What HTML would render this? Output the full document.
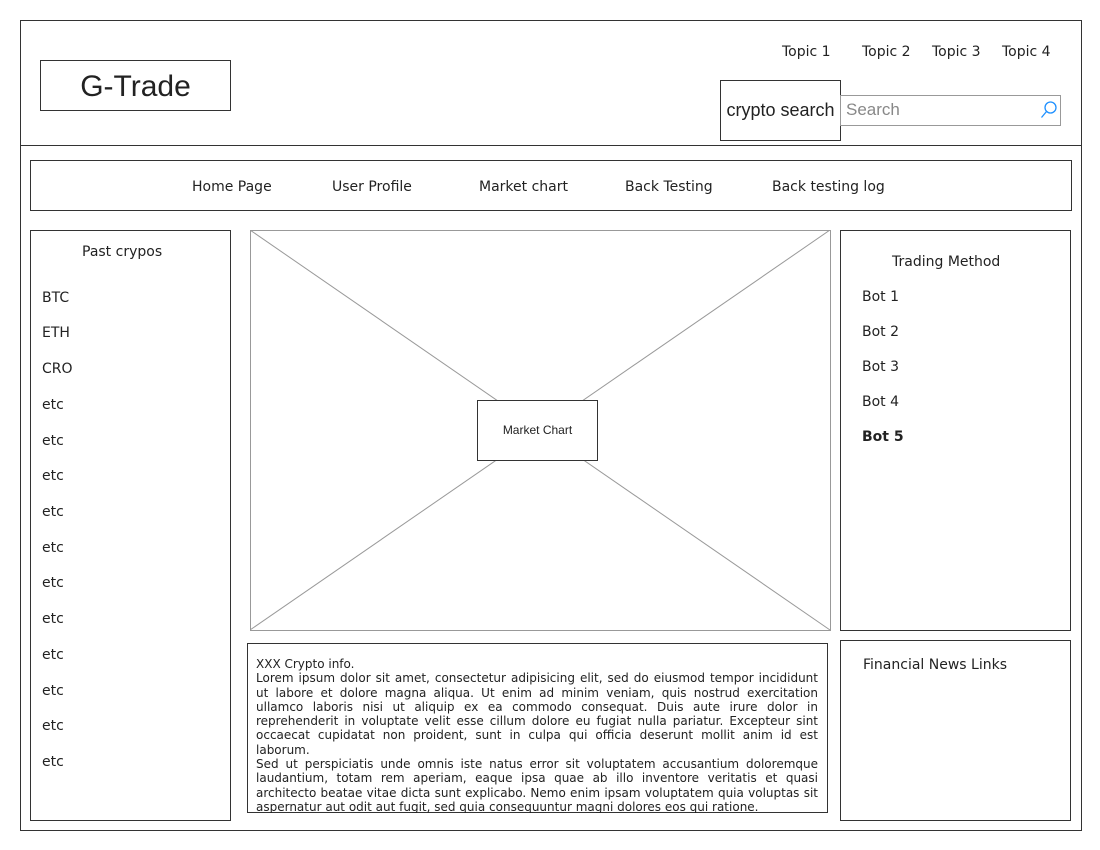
<!DOCTYPE html>
<html><head><style>
body{margin:0;width:1100px;height:850px;background:#fff;position:relative;font-family:"DejaVu Sans","Liberation Sans",sans-serif;color:#222;overflow:hidden}
.b{position:absolute;border:1.3px solid #333;box-sizing:border-box}
.t{position:absolute;font-size:14px;white-space:nowrap;margin-top:1px}
</style></head><body>
<div class="b" style="left:20px;top:20px;width:1062px;height:811px"></div>
<div style="position:absolute;left:20px;top:145px;width:1062px;border-top:1.3px solid #333"></div>
<div class="b" style="left:40px;top:60px;width:191px;height:51px"></div>
<div class="t" style="left:40px;top:69px;width:191px;text-align:center;font-family:'Liberation Sans',sans-serif;font-size:30px">G-Trade</div>
<div class="t" style="left:782px;top:43px">Topic 1</div>
<div class="t" style="left:862px;top:43px">Topic 2</div>
<div class="t" style="left:932px;top:43px">Topic 3</div>
<div class="t" style="left:1002px;top:43px">Topic 4</div>
<div class="b" style="left:720px;top:80px;width:121px;height:61px;border-width:1px"></div>
<div class="t" style="left:720px;top:99px;width:121px;text-align:center;font-family:'Liberation Sans',sans-serif;font-size:18px">crypto search</div>
<div class="b" style="left:840px;top:95px;width:221px;height:31px;border:1px solid #999"></div>
<div class="t" style="left:846px;top:99px;font-family:'Liberation Sans',sans-serif;font-size:17px;color:#888">Search</div>
<svg style="position:absolute;left:1040px;top:100px" width="18" height="20"><circle cx="10.5" cy="7.5" r="5.5" fill="none" stroke="#1e90ff" stroke-width="1.3"/><line x1="6.5" y1="11.5" x2="1.5" y2="17.5" stroke="#1e90ff" stroke-width="1.3"/></svg>
<div class="b" style="left:30px;top:160px;width:1042px;height:51px"></div>
<div class="t" style="left:192px;top:178px">Home Page</div>
<div class="t" style="left:332px;top:178px">User Profile</div>
<div class="t" style="left:479px;top:178px">Market chart</div>
<div class="t" style="left:625px;top:178px">Back Testing</div>
<div class="t" style="left:772px;top:178px">Back testing log</div>
<div class="b" style="left:30px;top:230px;width:201px;height:591px"></div>
<div class="t" style="left:82px;top:243px">Past crypos</div>
<div class="t" style="left:42px;top:289px">BTC</div>
<div class="t" style="left:42px;top:324px">ETH</div>
<div class="t" style="left:42px;top:360px">CRO</div>
<div class="t" style="left:42px;top:396px">etc</div>
<div class="t" style="left:42px;top:432px">etc</div>
<div class="t" style="left:42px;top:467px">etc</div>
<div class="t" style="left:42px;top:503px">etc</div>
<div class="t" style="left:42px;top:539px">etc</div>
<div class="t" style="left:42px;top:574px">etc</div>
<div class="t" style="left:42px;top:610px">etc</div>
<div class="t" style="left:42px;top:646px">etc</div>
<div class="t" style="left:42px;top:682px">etc</div>
<div class="t" style="left:42px;top:717px">etc</div>
<div class="t" style="left:42px;top:753px">etc</div>
<svg style="position:absolute;left:250px;top:230px" width="581" height="401"><rect x="0.5" y="0.5" width="580" height="400" fill="none" stroke="#999"/><line x1="0" y1="0" x2="580" y2="400" stroke="#999"/><line x1="580" y1="0" x2="0" y2="400" stroke="#999"/></svg>
<div class="b" style="left:477px;top:400px;width:121px;height:61px;border-width:1px;background:#fff"></div>
<div class="t" style="left:477px;top:422px;width:121px;text-align:center;font-family:'Liberation Sans',sans-serif;font-size:12px">Market Chart</div>
<div class="b" style="left:840px;top:230px;width:231px;height:401px"></div>
<div class="t" style="left:892px;top:253px">Trading Method</div>
<div class="t" style="left:862px;top:288px">Bot 1</div>
<div class="t" style="left:862px;top:323px">Bot 2</div>
<div class="t" style="left:862px;top:358px">Bot 3</div>
<div class="t" style="left:862px;top:393px">Bot 4</div>
<div class="t" style="left:862px;top:428px;font-weight:bold">Bot 5</div>
<div class="b" style="left:840px;top:640px;width:231px;height:181px"></div>
<div class="t" style="left:863px;top:656px">Financial News Links</div>
<div class="b" style="left:247px;top:643px;width:581px;height:170px"></div>
<div style="position:absolute;left:256px;top:657px;width:562px;height:156px;overflow:hidden;font-size:12px;line-height:14.3px;text-align:justify;color:#222">XXX Crypto info.<br>Lorem ipsum dolor sit amet, consectetur adipisicing elit, sed do eiusmod tempor incididunt ut labore et dolore magna aliqua. Ut enim ad minim veniam, quis nostrud exercitation ullamco laboris nisi ut aliquip ex ea commodo consequat. Duis aute irure dolor in reprehenderit in voluptate velit esse cillum dolore eu fugiat nulla pariatur. Excepteur sint occaecat cupidatat non proident, sunt in culpa qui officia deserunt mollit anim id est laborum.<br>Sed ut perspiciatis unde omnis iste natus error sit voluptatem accusantium doloremque laudantium, totam rem aperiam, eaque ipsa quae ab illo inventore veritatis et quasi architecto beatae vitae dicta sunt explicabo. Nemo enim ipsam voluptatem quia voluptas sit aspernatur aut odit aut fugit, sed quia consequuntur magni dolores eos qui ratione.</div>
</body></html>
